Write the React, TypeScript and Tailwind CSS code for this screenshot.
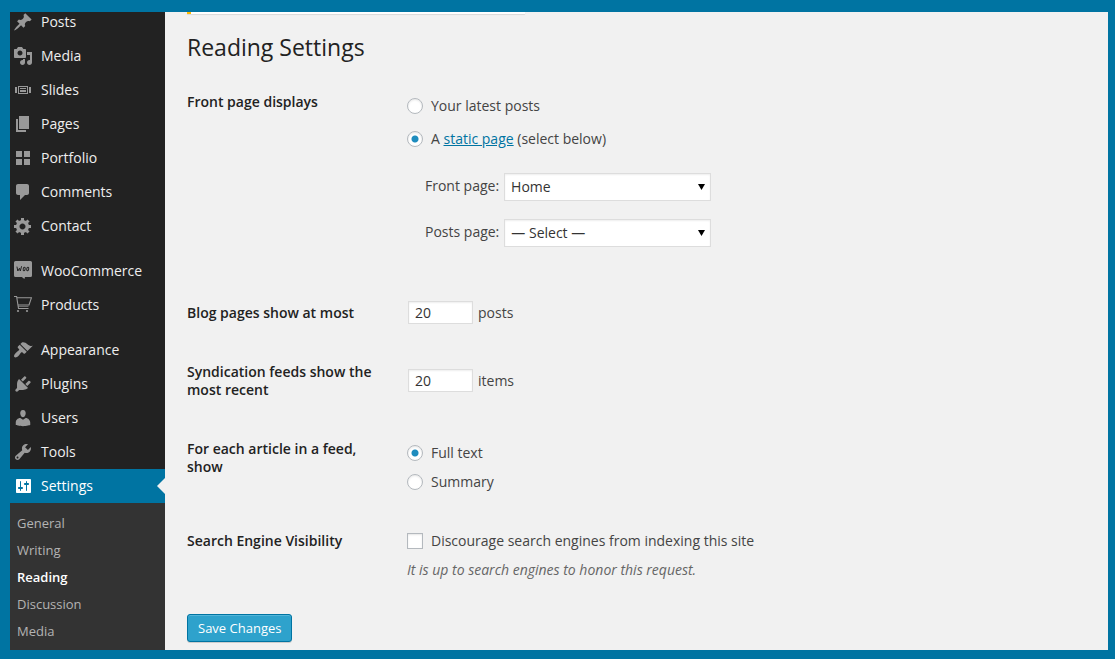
import { useState, type ReactNode } from "react";

const paths = {
  post: "M10.44 3.02l1.82-1.82 6.36 6.35-1.83 1.82c-1.05-.68-2.48-.57-3.41.36l-.75.75c-.92.93-1.04 2.35-.35 3.41l-1.83 1.82-2.41-2.41-2.8 2.79c-.42.42-3.38 2.71-3.8 2.29s1.86-3.39 2.28-3.81l2.79-2.79L4.1 9.36l1.83-1.82c1.05.69 2.48.57 3.4-.36l.75-.75c.93-.92 1.05-2.35.36-3.41z",
  media:
    "M13 11V4c0-.55-.45-1-1-1h-1.67L9 1H5L3.67 3H2c-.55 0-1 .45-1 1v7c0 .55.45 1 1 1h10c.55 0 1-.45 1-1zM7 4.5c1.38 0 2.5 1.12 2.5 2.5S8.38 9.5 7 9.5 4.5 8.38 4.5 7 5.62 4.5 7 4.5zM14 6h5v10.5c0 1.38-1.12 2.5-2.5 2.5S14 17.88 14 16.5s1.12-2.5 2.5-2.5c.17 0 .34.02.5.05V9h-3V6zm-4 8.05V13h2v3.5c0 1.38-1.12 2.5-2.5 2.5S7 17.88 7 16.5 8.12 14 9.5 14c.17 0 .34.02.5.05z",
  slides:
    "M5 14V6h10v8H5zm-3-1V7h2v6H2zm4-6v6h8V7H6zm10 0h2v6h-2V7zm-3 2V8H7v1h6zm0 3v-2H7v2h6z",
  page: "M6 15V2h10v13H6zm-1 1h8v2H3V5h2v11z",
  grid: "M9 9V3H3v6h6zm8 0V3h-6v6h6zm-8 8v-6H3v6h6zm8 0v-6h-6v6h6z",
  comments:
    "M5 2h9c1.1 0 2 .9 2 2v7c0 1.1-.9 2-2 2h-2l-5 5v-5H5c-1.1 0-2-.9-2-2V4c0-1.1.9-2 2-2z",
  generic:
    "M18 12h-2.18c-.17.7-.44 1.35-.81 1.93l1.54 1.54-2.1 2.1-1.54-1.54c-.58.36-1.23.63-1.91.79V19H8v-2.18c-.68-.16-1.33-.43-1.91-.79l-1.54 1.54-2.12-2.12 1.54-1.54c-.36-.58-.63-1.23-.79-1.91H1V9.03h2.17c.16-.7.44-1.35.8-1.94L2.43 5.55l2.1-2.1 1.54 1.54c.58-.37 1.24-.64 1.93-.81V2h3v2.18c.68.16 1.33.43 1.91.79l1.54-1.54 2.12 2.12-1.54 1.54c.36.59.64 1.24.8 1.94H18V12zm-8.5 1.5c1.66 0 3-1.34 3-3s-1.34-3-3-3-3 1.34-3 3 1.34 3 3 3z",
  appearance:
    "M14.48 11.06L7.41 3.99l1.5-1.5c.5-.56 2.3-.47 3.51.32 1.21.8 1.43 1.28 2.91 2.1 1.18.64 2.45 1.26 4.45.85zm-.71.71L6.7 4.7 4.93 6.47c-.39.39-.39 1.02 0 1.41l1.06 1.06c.39.39.39 1.03 0 1.42-.6.6-1.43 1.11-2.21 1.69-.35.26-.7.53-1.01.84C1.43 14.23.4 16.08 1.4 17.07c.99 1 2.84-.03 4.18-1.36.31-.31.58-.66.85-1.02.57-.78 1.08-1.61 1.69-2.21.39-.39 1.02-.39 1.41 0l1.06 1.06c.39.39 1.02.39 1.41 0z",
  plugins:
    "M13.11 4.36L9.87 7.6 8 5.73l3.24-3.24c.35-.34 1.05-.2 1.56.32.52.51.66 1.21.31 1.55zm-8 1.77l.91-1.12 9.01 9.01-1.19.84c-.71.71-2.63 1.16-3.82 1.16H6.14L4.9 17.26c-.59.59-1.54.59-2.12 0-.59-.58-.59-1.53 0-2.12l1.24-1.24v-3.88c0-1.13.4-3.19 1.09-3.89zm7.26 3.97l3.24-3.24c.34-.35 1.04-.21 1.55.31.52.51.66 1.21.31 1.55l-3.24 3.25z",
  users:
    "M10 9.25c-2.27 0-2.73-3.44-2.73-3.44C7 4.02 7.82 2 9.97 2c2.16 0 2.98 2.02 2.71 3.81 0 0-.41 3.44-2.68 3.44zm0 2.57L12.72 10c2.39 0 4.52 2.33 4.52 4.53v2.49s-3.65 1.13-7.24 1.13c-3.65 0-7.24-1.13-7.24-1.13v-2.49c0-2.25 1.94-4.48 4.47-4.48z",
  tools:
    "M16.68 9.77c-1.34 1.34-3.3 1.67-4.95.99l-5.41 6.52c-.99.99-2.59.99-3.58 0s-.99-2.59 0-3.57l6.52-5.42c-.68-1.65-.35-3.61.99-4.95 1.28-1.28 3.12-1.62 4.72-1.06l-2.89 2.89 2.82 2.82 2.86-2.87c.53 1.58.18 3.39-1.08 4.65zM3.81 16.21c.4.39 1.04.39 1.43 0 .4-.4.4-1.04 0-1.43-.39-.4-1.03-.4-1.43 0-.39.39-.39 1.03 0 1.43z",
  settings:
    "M18 16V4c0-.55-.45-1-1-1H4c-.55 0-1 .45-1 1v12c0 .55.45 1 1 1h13c.55 0 1-.45 1-1zM8 11h1c.55 0 1 .45 1 1s-.45 1-1 1H8v1.5c0 .28-.22.5-.5.5s-.5-.22-.5-.5V13H6c-.55 0-1-.45-1-1s.45-1 1-1h1V5.5c0-.28.22-.5.5-.5s.5.22.5.5V11zm5-2h-1c-.55 0-1-.45-1-1s.45-1 1-1h1V5.5c0-.28.22-.5.5-.5s.5.22.5.5V7h1c.55 0 1 .45 1 1s-.45 1-1 1h-1v5.5c0 .28-.22.5-.5.5s-.5-.22-.5-.5V9z",
};

function Glyph({ d }: { d: string }) {
  return (
    <svg viewBox="0 0 20 20" className="size-5 shrink-0 fill-current" aria-hidden="true">
      <path d={d} />
    </svg>
  );
}

function WooGlyph() {
  return (
    <svg viewBox="0 0 20 20" className="size-5 shrink-0" aria-hidden="true">
      <path
        fill="#999"
        d="M2.5 0h15A1.5 1.5 0 0 1 19 1.5v13a1.5 1.5 0 0 1-1.5 1.5H12l-.6 2-2.6-2H2.5A1.5 1.5 0 0 1 1 14.5v-13A1.5 1.5 0 0 1 2.5 0z"
      />
      <g fill="none" stroke="#222" strokeWidth="1" strokeLinecap="round" strokeLinejoin="round">
        <path d="M4 6l.8 4 1.700-2.800.8 2.800 1.200-4.400" />
        <ellipse cx="11.200" cy="8" rx="1" ry="1.700" transform="rotate(12 11.200 8)" />
        <ellipse cx="14.700" cy="8" rx="1" ry="1.700" transform="rotate(12 14.700 8)" />
      </g>
    </svg>
  );
}

function CartGlyph() {
  return (
    <svg viewBox="0 0 20 20" className="size-5 shrink-0" aria-hidden="true">
      <g fill="none" stroke="#999" strokeWidth="1.1">
        <path d="M1 1.5h2.600L5.500 13.500H15.500" />
        <path d="M4 2.800h14.400L16 10H5" />
        <path d="M5 11.500h10.500" strokeWidth=".6" />
      </g>
      <circle cx="5" cy="16" r="1.100" fill="#999" />
      <circle cx="14" cy="16" r="1.100" fill="#999" />
    </svg>
  );
}

const groups: { label: string; icon: ReactNode }[][] = [
  [
    { label: "Posts", icon: <Glyph d={paths.post} /> },
    { label: "Media", icon: <Glyph d={paths.media} /> },
    { label: "Slides", icon: <Glyph d={paths.slides} /> },
    { label: "Pages", icon: <Glyph d={paths.page} /> },
    { label: "Portfolio", icon: <Glyph d={paths.grid} /> },
    { label: "Comments", icon: <Glyph d={paths.comments} /> },
    { label: "Contact", icon: <Glyph d={paths.generic} /> },
  ],
  [
    { label: "WooCommerce", icon: <WooGlyph /> },
    { label: "Products", icon: <CartGlyph /> },
  ],
  [
    { label: "Appearance", icon: <Glyph d={paths.appearance} /> },
    { label: "Plugins", icon: <Glyph d={paths.plugins} /> },
    { label: "Users", icon: <Glyph d={paths.users} /> },
    { label: "Tools", icon: <Glyph d={paths.tools} /> },
    { label: "Settings", icon: <Glyph d={paths.settings} /> },
  ],
];

const subItems = ["General", "Writing", "Reading", "Discussion", "Media"];

function Sidebar() {
  return (
    <aside className="w-[155px] shrink-0 overflow-hidden bg-[#222]">
      <nav className="-mt-[7px]">
        <div className="flex flex-col gap-[11px]">
          {groups.map((group, i) => (
            <ul key={i}>
              {group.map(({ label, icon }) => {
                const current = label === "Settings";
                return (
                  <li key={label}>
                    <a
                      href={"#" + label.toLowerCase()}
                      aria-current={current ? "true" : undefined}
                      className={
                        current
                          ? "relative flex h-[34px] items-center gap-2 bg-[#0074a2] pl-[3px] text-white"
                          : "flex h-[34px] items-center gap-2 pl-[3px] text-[#999]"
                      }
                    >
                      {icon}
                      <span className={current ? "text-white" : "text-[#eee]"}>{label}</span>
                      {current && (
                        <span className="absolute top-[9px] right-0 border-8 border-transparent border-r-[#f1f1f1]" />
                      )}
                    </a>
                  </li>
                );
              })}
            </ul>
          ))}
        </div>
        <ul className="bg-[#333] py-1.5 text-[13px]">
          {subItems.map((label) => (
            <li key={label}>
              <a
                href={"#settings-" + label.toLowerCase()}
                className={
                  label === "Reading"
                    ? "flex h-[27px] items-center pl-[7px] font-semibold text-white"
                    : "flex h-[27px] items-center pl-[7px] text-[#b4b4b4]"
                }
              >
                {label}
              </a>
            </li>
          ))}
        </ul>
      </nav>
    </aside>
  );
}

const radioClass =
  "size-4 shrink-0 appearance-none rounded-full border border-[#b4b9be] bg-white shadow-[inset_0_1px_2px_rgba(0,0,0,0.1)] checked:bg-[radial-gradient(circle,#1e8cbe_0,#1e8cbe_3px,#fff_4px)]";
const fieldClass =
  "border border-[#ddd] bg-white text-[#333] shadow-[inset_0_1px_2px_rgba(0,0,0,0.07)]";

function PageSelect({ id, label, options }: { id: string; label: string; options: string[] }) {
  return (
    <div className="flex items-start gap-[5px] pl-[18px]">
      <label htmlFor={id} className="leading-[26px]">
        {label}
      </label>
      <div className="relative w-[207px]">
        <select id={id} className={"h-7 w-full appearance-none pr-5 pl-1.5 " + fieldClass}>
          {options.map((o) => (
            <option key={o}>{o}</option>
          ))}
        </select>
        <svg
          viewBox="0 0 7 6"
          className="pointer-events-none absolute top-[11px] right-1.5 h-1.5 w-[7px]"
          aria-hidden="true"
        >
          <path d="M0 0h7L3.5 6z" />
        </svg>
      </div>
    </div>
  );
}

const rowClass = "grid grid-cols-[220px_1fr]";
const headClass = "pt-5 pb-[21px] pr-6 leading-[18px] font-semibold text-[#222]";
const lineClass = "flex h-5 items-center gap-2";

export default function App() {
  const [front, setFront] = useState("page");
  const [feed, setFeed] = useState("full");

  return (
    <div className="flex min-h-screen bg-[#0074a2] pt-3 pr-[7px] pb-[9px] pl-2.5 font-['Open_Sans',sans-serif] text-[14px] leading-5 text-[#444]">
      <Sidebar />
      <main className="min-w-0 flex-1 bg-[#f1f1f1] pl-[22px]">
        <div className="h-0.5 w-[338px] border-l-4 border-[#ffba00] bg-white shadow-[0_1px_1px_rgba(0,0,0,0.1)]" />
        <h1 className="mt-[18px] mb-[11px] text-[23px] leading-[30px] text-[#222]">
          Reading Settings
        </h1>
        <form onSubmit={(e) => e.preventDefault()}>
          <div className={rowClass} role="radiogroup" aria-labelledby="front-head">
            <div id="front-head" className={headClass}>
              Front page displays
            </div>
            <div className="pt-[23px] pb-[37px]">
              <div className="flex flex-col gap-[13px]">
                <label className={lineClass}>
                  <input
                    type="radio"
                    name="front"
                    className={radioClass}
                    checked={front === "posts"}
                    onChange={() => setFront("posts")}
                  />
                  Your latest posts
                </label>
                <label className={lineClass}>
                  <input
                    type="radio"
                    name="front"
                    className={radioClass}
                    checked={front === "page"}
                    onChange={() => setFront("page")}
                  />
                  <span>
                    A{" "}
                    <a href="#pages" className="text-[#0074a2] underline">
                      static page
                    </a>{" "}
                    (select below)
                  </span>
                </label>
              </div>
              <div className="mt-6 flex flex-col gap-[18px]">
                <PageSelect id="front-page" label="Front page:" options={["Home"]} />
                <PageSelect id="posts-page" label="Posts page:" options={["— Select —"]} />
              </div>
            </div>
          </div>

          <div className={rowClass}>
            <label htmlFor="blog-count" className={headClass}>
              Blog pages show at most
            </label>
            <div className="flex items-start gap-[5px] pt-[17px] pl-px">
              <input
                id="blog-count"
                defaultValue="20"
                inputMode="numeric"
                className={"h-[23px] w-[65px] px-1.5 " + fieldClass}
              />
              <span className="leading-[23px]">posts</span>
            </div>
          </div>

          <div className={rowClass}>
            <label htmlFor="feed-count" className={headClass}>
              Syndication feeds show the most recent
            </label>
            <div className="flex items-start gap-[5px] pt-[26px] pl-px">
              <input
                id="feed-count"
                defaultValue="20"
                inputMode="numeric"
                className={"h-[23px] w-[65px] px-1.5 " + fieldClass}
              />
              <span className="leading-[23px]">items</span>
            </div>
          </div>

          <div className={rowClass} role="radiogroup" aria-labelledby="feed-head">
            <div id="feed-head" className={headClass}>
              For each article in a feed, show
            </div>
            <div className="flex flex-col gap-[9px] pt-[23px] pb-5">
              <label className={lineClass}>
                <input
                  type="radio"
                  name="feed"
                  className={radioClass}
                  checked={feed === "full"}
                  onChange={() => setFeed("full")}
                />
                Full text
              </label>
              <label className={lineClass}>
                <input
                  type="radio"
                  name="feed"
                  className={radioClass}
                  checked={feed === "summary"}
                  onChange={() => setFeed("summary")}
                />
                Summary
              </label>
            </div>
          </div>

          <div className={rowClass}>
            <div className={headClass}>Search Engine Visibility</div>
            <div className="flex flex-col gap-[9px] pt-[19px] pb-5">
              <label className={lineClass}>
                <input
                  type="checkbox"
                  className="size-4 shrink-0 appearance-none border border-[#b4b9be] bg-white shadow-[inset_0_1px_2px_rgba(0,0,0,0.1)] checked:bg-[#1e8cbe]"
                />
                Discourage search engines from indexing this site
              </label>
              <p className="text-[#666] italic">
                It is up to search engines to honor this request.
              </p>
            </div>
          </div>

          <button
            type="submit"
            className="mt-3.5 flex h-7 items-center rounded-[3px] border border-[#0074a2] bg-[#2ea2cc] px-2.5 text-[13px] text-white shadow-[inset_0_1px_0_rgba(120,200,230,0.5),0_1px_0_rgba(0,0,0,0.15)]"
          >
            Save Changes
          </button>
        </form>
      </main>
    </div>
  );
}
